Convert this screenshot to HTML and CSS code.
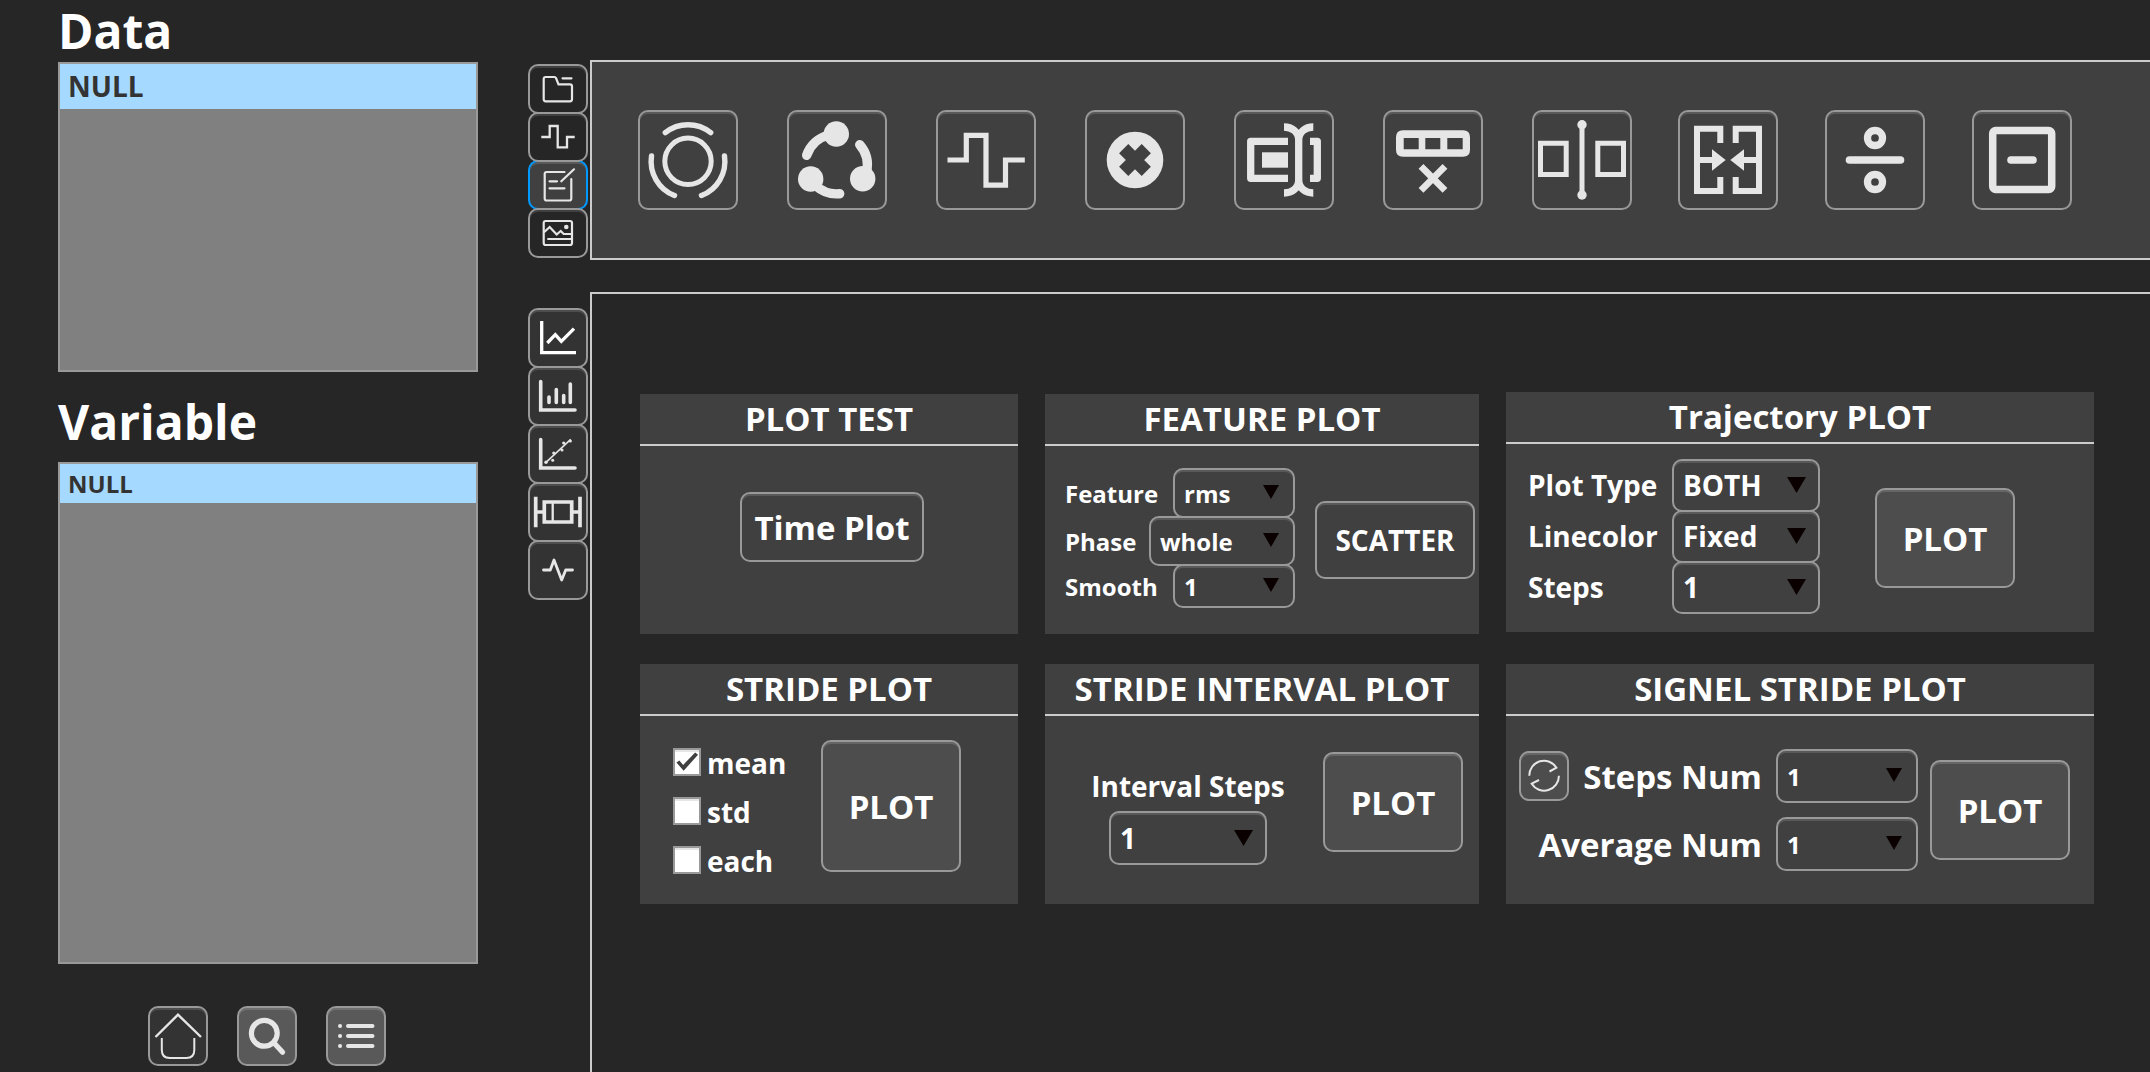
FILE: index.html
```
<!DOCTYPE html>
<html lang="en">
<head>
    <meta charset="UTF-8">
    <meta name="viewport" content="width=device-width, initial-scale=1.0">
    <title>Stride Plot</title>
    <link rel="stylesheet" href="styles.css">
</head>
<body>
    <aside class="sidebar">
        <h1>Data</h1>
        <ul class="list data-list">
            <li class="selected">NULL</li>
        </ul>

        <h1 class="variable-title">Variable</h1>
        <ul class="list variable-list">
            <li class="selected">NULL</li>
        </ul>

        <div class="sidebar-buttons">
            <button type="button" class="btn icon-btn dark" aria-label="Home">
                <svg viewBox="2 2 56 56"><path stroke-width="2.4" d="M7.5 31 30 8.7 53 31"/><path stroke-width="2" d="M13.8 32v12q0 8 8 8h16.5q8 0 8-8V32"/></svg>
            </button>
            <button type="button" class="btn icon-btn light" aria-label="Search">
                <svg viewBox="2 2 56 56"><circle cx="27.3" cy="27.3" r="12.9" stroke-width="5.2"/><path stroke-width="5.2" stroke-linecap="round" d="M38 38l7.6 8.2"/></svg>
            </button>
            <button type="button" class="btn icon-btn light" aria-label="List">
                <svg viewBox="2 2 56 56"><path stroke-width="4" stroke-linecap="round" d="M14 20h.1M14 30h.1M14 40h.1M22 20h24.5M22 30h24.5M22 40h24.5"/></svg>
            </button>
        </div>
    </aside>

    <main class="main">
        <!-- Toolbar tabs -->
        <nav class="tabs top-tabs">
            <button type="button" class="btn" aria-label="File">
                <svg viewBox="2 2 56 46"><path stroke-width="2.2" stroke-linecap="round" d="M17.7 13H26.5Q27.5 13 28 14L30.5 20.3H42q2 0 2 2V35.3q0 2-2 2H17.7q-2 0-2-2V15q0-2 2-2zM34.5 14.3h9"/></svg>
            </button>
            <button type="button" class="btn" aria-label="Signal">
                <svg viewBox="2 2 56 46"><path stroke-width="2.3" d="M13.3 25H21.7V14H29.7V35.3H39V25H46.7"/></svg>
            </button>
            <button type="button" class="btn active" aria-label="Edit">
                <svg viewBox="2 2 56 46"><path stroke-width="2.2" stroke-linecap="round" d="M36.5 12H18.7q-2 0-2 2V38.5q0 2 2 2H41.3q2 0 2-2V19M33.3 21.3 46 9.3M21.5 21.3h7.5M21.5 28.3h15"/></svg>
            </button>
            <button type="button" class="btn" aria-label="Image">
                <svg viewBox="2 2 56 46"><rect x="15.7" y="13" width="28.3" height="24" rx="2" stroke-width="2.2"/><path stroke-width="2.2" d="M16 24.3 21.7 19 28.7 26.5 32.7 23 35.7 26H44M19.3 31H44"/><circle class="fill" cx="38.3" cy="19" r="2.3"/></svg>
            </button>
        </nav>

        <section class="toolbar">
            <div class="tool-group">
                <button type="button" class="btn tool" aria-label="Rotate">
                    <svg viewBox="2 2 96 96"><circle cx="50" cy="51.3" r="23.2" stroke-width="5"/><path stroke-width="5.4" stroke-linecap="round" d="M27.3 22.7A36.6 36.6 0 0 1 72.7 22.7M13.5 46A36.6 36.6 0 0 0 36.5 85.5M86.5 46A36.6 36.6 0 0 1 63.5 85.5"/></svg>
                </button>
                <button type="button" class="btn tool" aria-label="Cycle">
                    <svg viewBox="2 2 96 96"><path stroke-width="9.4" stroke-linecap="round" d="M19.7 45.3A31 31 0 0 1 42 25M72.7 34.7A31 31 0 0 1 79.5 62M29 76A31 31 0 0 0 52.7 83.7"/><g class="fill"><circle cx="49.3" cy="24" r="12.7"/><circle cx="75.7" cy="68.7" r="12.7"/><circle cx="23.7" cy="69" r="12.7"/></g></svg>
                </button>
                <button type="button" class="btn tool" aria-label="Square wave">
                    <svg viewBox="2 2 96 96"><path stroke-width="5.2" d="M11.5 50H30.3V25.3H50V75.2H69.5V50H88.8"/></svg>
                </button>
                <button type="button" class="btn tool" aria-label="Clear">
                    <svg viewBox="2 2 96 96"><circle class="fill" cx="50" cy="50" r="28.3"/><path class="cut" stroke-width="13" d="M38.7 38.7 61.3 61.3M61.3 38.7 38.7 61.3"/></svg>
                </button>
                <button type="button" class="btn tool" aria-label="Rename">
                    <svg viewBox="2 2 96 96"><path stroke-width="7.3" stroke-linejoin="round" d="M54 31.3H16.7V68.3H54M76 31.3H83.3V68.3H76M50 17C58 17 64.7 22 64.7 30V70C64.7 78 58 83 50 83M79.3 17C71.4 17 64.7 22 64.7 30M64.7 70C64.7 78 71.4 83 79.3 83"/><path class="fill" d="M28 42.3H54V57.7H28z"/></svg>
                </button>
                <button type="button" class="btn tool" aria-label="Delete row">
                    <svg viewBox="2 2 96 96"><path class="fill" fill-rule="evenodd" d="M20 20.3H80q7 0 7 7V39.7q0 7-7 7H20q-7 0-7-7V27.3q0-7 7-7zM20.7 28V39.3H35.7V28zM42.3 28V39.3H57.3V28zM64.3 28V39.3H79.7V28z"/><path stroke-width="6.8" d="M38 56.3 62 80.3M62 56.3 38 80.3"/></svg>
                </button>
                <button type="button" class="btn tool" aria-label="Split">
                    <svg viewBox="2 2 96 96"><path stroke-width="5" d="M8.5 33.2H34.2V64.5H8.5zM65.8 33.2H91.5V64.5H65.8zM50 14.7V85"/><g class="fill"><circle cx="50" cy="14.7" r="4.7"/><circle cx="50" cy="85" r="4.7"/></g></svg>
                </button>
            </div>
            <div class="tool-group narrow">
                <button type="button" class="btn tool" aria-label="Merge">
                    <svg viewBox="2 2 96 96"><path stroke-width="6" d="M42.3 33V18.7H19V81H42.3V67M57.7 33V18.7H81V81H57.7V67M20 50H35M80 50H65"/><path class="fill" d="M34 39.3 47.7 50 34 60.7zM66 39.3 52.3 50 66 60.7z"/></svg>
                </button>
                <button type="button" class="btn tool" aria-label="Divide">
                    <svg viewBox="2 2 96 96"><g stroke-width="7.3"><circle cx="50" cy="28" r="7.5"/><circle cx="50" cy="72" r="7.5"/></g><path stroke-width="7.6" stroke-linecap="round" d="M24.5 50H75.5"/></svg>
                </button>
                <button type="button" class="btn tool" aria-label="Subtract">
                    <svg viewBox="2 2 96 96"><rect x="20.7" y="20.5" width="59" height="59" rx="3" stroke-width="7.5"/><path stroke-width="7.6" stroke-linecap="round" d="M39 50H61"/></svg>
                </button>
            </div>
        </section>

        <!-- Plot tabs -->
        <nav class="tabs plot-tabs">
            <button type="button" class="btn dark" aria-label="Line chart">
                <svg class="bright" viewBox="2 2 56 56"><path stroke-width="3.3" d="M13.7 13V44.7H48M19.3 35 27.3 26.7 33.3 33.3 46 20.7"/></svg>
            </button>
            <button type="button" class="btn dark" aria-label="Bar chart">
                <svg viewBox="2 2 56 56"><path stroke-width="3.6" stroke-linecap="round" d="M12.7 15.5V44H47M21 31V36.5M28.3 23.5V36.5M35.7 29.5V36.5M42.3 18V36.5"/></svg>
            </button>
            <button type="button" class="btn dark" aria-label="Scatter chart">
                <svg viewBox="2 2 56 56"><path stroke-width="3.6" stroke-linecap="round" d="M12.7 15.5V44H47"/><path stroke-width="1.6" d="M17.7 38.7 42.7 15.3"/><g class="fill"><circle cx="18" cy="38.3" r="1.7"/><circle cx="24.7" cy="36.3" r="1.5"/><circle cx="25.7" cy="29" r="1.5"/><circle cx="34" cy="26" r="1.5"/><circle cx="35.7" cy="19" r="1.6"/><circle cx="42.3" cy="17" r="1.6"/></g></svg>
            </button>
            <button type="button" class="btn dark" aria-label="Box plot">
                <svg viewBox="2 2 56 56"><path stroke-width="3.7" d="M7.7 14.7V45.3M52 14.7V45.3M7.7 30H16M44 30H52M16.3 20H43.7V40H16.3z"/><path stroke-width="2.3" d="M24.7 20V40"/></svg>
            </button>
            <button type="button" class="btn dark" aria-label="Pulse">
                <svg viewBox="2 2 56 56"><path stroke-width="2.8" stroke-linecap="round" stroke-linejoin="round" d="M15.5 30H22.3L26 20 33.7 40 37.7 30H44.5"/></svg>
            </button>
        </nav>

        <section class="plots">
            <div class="column col-test">
                <div class="card">
                    <h2>PLOT TEST</h2>
                    <div class="card-body test-body">
                        <button type="button" class="btn time-plot">Time Plot</button>
                    </div>
                </div>
                <div class="card">
                    <h2>STRIDE PLOT</h2>
                    <div class="card-body stride-body">
                        <div class="checks">
                            <label><input type="checkbox" checked>mean</label>
                            <label><input type="checkbox">std</label>
                            <label><input type="checkbox">each</label>
                        </div>
                        <button type="button" class="btn plot tall">PLOT</button>
                    </div>
                </div>
            </div>

            <div class="column col-feature">
                <div class="card">
                    <h2>FEATURE PLOT</h2>
                    <div class="card-body feature-body">
                        <div class="fields small">
                            <div class="field">
                                <label for="feature">Feature</label>
                                <span class="combo"><select id="feature"><option>rms</option></select></span>
                            </div>
                            <div class="field">
                                <label for="phase">Phase</label>
                                <span class="combo wide"><select id="phase"><option>whole</option></select></span>
                            </div>
                            <div class="field">
                                <label for="smooth">Smooth</label>
                                <span class="combo short"><select id="smooth"><option>1</option></select></span>
                            </div>
                        </div>
                        <button type="button" class="btn scatter">SCATTER</button>
                    </div>
                </div>
                <div class="card">
                    <h2>STRIDE INTERVAL PLOT</h2>
                    <div class="card-body interval-body">
                        <div class="interval">
                            <label for="interval">Interval Steps</label>
                            <span class="combo"><select id="interval"><option>1</option></select></span>
                        </div>
                        <button type="button" class="btn plot">PLOT</button>
                    </div>
                </div>
            </div>

            <div class="column col-trajectory">
                <div class="card">
                    <h2>Trajectory PLOT</h2>
                    <div class="card-body trajectory-body">
                        <div class="fields large">
                            <div class="field">
                                <label for="plotType">Plot Type</label>
                                <span class="combo"><select id="plotType"><option>BOTH</option></select></span>
                            </div>
                            <div class="field">
                                <label for="linecolor">Linecolor</label>
                                <span class="combo"><select id="linecolor"><option>Fixed</option></select></span>
                            </div>
                            <div class="field">
                                <label for="steps">Steps</label>
                                <span class="combo"><select id="steps"><option>1</option></select></span>
                            </div>
                        </div>
                        <button type="button" class="btn plot">PLOT</button>
                    </div>
                </div>
                <div class="card">
                    <h2>SIGNEL STRIDE PLOT</h2>
                    <div class="card-body single-body">
                        <div class="single-fields">
                            <div class="field">
                                <button type="button" class="btn refresh" aria-label="Refresh">
                                    <svg viewBox="2 2 46 46"><path stroke-width="2" d="M10.3 24.7A14.7 14.7 0 0 1 37.5 16.7L30.5 20.5M39.9 24.7A14.7 14.7 0 0 1 12.7 32.7L20 29"/></svg>
                                </button>
                                <label for="stepsNum">Steps Num</label>
                                <span class="combo"><select id="stepsNum"><option>1</option></select></span>
                            </div>
                            <div class="field">
                                <label for="averageNum">Average Num</label>
                                <span class="combo"><select id="averageNum"><option>1</option></select></span>
                            </div>
                        </div>
                        <button type="button" class="btn plot">PLOT</button>
                    </div>
                </div>
            </div>
        </section>
    </main>
</body>
</html>
```
FILE: styles.css
```
* {
    box-sizing: border-box;
}

body {
    display: flex;
    min-height: 100vh;
    margin: 0;
    background-color: #262626;
    color: #fff;
    font-family: "Open Sans", "Noto Sans", sans-serif;
    font-weight: bold;
}

/* Sidebar */
.sidebar {
    display: flex;
    flex-direction: column;
    width: 478px;
    padding: 0 0 6px 58px;
}

h1 {
    margin: 0;
    height: 62px;
    font-size: 48px;
    line-height: 62px;
}

.variable-title {
    height: 90px;
    line-height: 100px;
}

.list {
    margin: 0;
    padding: 0;
    list-style: none;
    background-color: #808080;
    border: 2px solid #999;
}

.list li {
    padding: 0 8px;
    color: #333;
}

.list .selected {
    background-color: #a6d9ff;
}

.data-list {
    height: 310px;
    font-size: 28px;
    line-height: 45px;
}

.variable-list {
    flex: 1;
    font-size: 24px;
    line-height: 39px;
}

.sidebar-buttons {
    display: flex;
    gap: 29px;
    margin: 42px 0 0 90px;
}

/* Buttons */
.btn {
    display: flex;
    align-items: center;
    justify-content: center;
    flex-shrink: 0;
    padding: 0;
    border: 2px solid #999;
    border-radius: 10px;
    background-color: #404040;
    box-shadow: inset 0 2px 0 #595959;
    color: #fff;
    font-family: inherit;
    font-weight: bold;
    font-size: 33px;
    cursor: pointer;
}

.btn:hover {
    border-color: #0099ff;
}

.btn svg {
    display: block;
    width: 100%;
    height: 100%;
    fill: none;
    stroke: #e6e6e6;
}

.btn svg .fill {
    fill: #e6e6e6;
    stroke: none;
}

.btn svg .cut {
    stroke: #404040;
}

.btn svg.bright {
    stroke: #fff;
}

.icon-btn {
    width: 60px;
    height: 60px;
}

.dark {
    background-color: #333;
    box-shadow: inset 0 2px 0 #4d4d4d;
}

.light {
    background-color: #595959;
    box-shadow: inset 0 2px 0 #707070;
}

/* Main area */
.main {
    flex: 1;
    display: grid;
    grid-template-columns: 60px 1fr;
    grid-template-rows: 200px 1fr;
    column-gap: 2px;
    row-gap: 32px;
    min-width: 0;
    padding: 60px 0 0 50px;
}

.tabs {
    display: flex;
    flex-direction: column;
}

.tabs .btn {
    position: relative;
    width: 60px;
}

.tabs .btn + .btn {
    margin-top: -2px;
}

.top-tabs {
    padding-top: 4px;
}

.top-tabs .btn {
    z-index: 1;
    height: 50px;
    background-color: #262626;
    box-shadow: inset 0 2px 0 #404040;
}

.top-tabs .active {
    z-index: 0;
    background-color: #404040;
    border-color: #0099ff;
    box-shadow: inset 0 2px 0 #595959;
}

.plot-tabs {
    padding-top: 16px;
}

.plot-tabs .btn {
    height: 60px;
}

.toolbar {
    display: flex;
    align-items: center;
    gap: 46px;
    padding-left: 46px;
    background-color: #404040;
    border: 2px solid #ccc;
    border-right: none;
    overflow: hidden;
}

.tool-group {
    display: flex;
    gap: 49px;
}

.narrow {
    gap: 47px;
}

.tool {
    width: 100px;
    height: 100px;
}

/* Plot cards */
.plots {
    display: flex;
    align-items: flex-start;
    gap: 27px;
    padding: 98px 56px 0 48px;
    border-top: 2px solid #ccc;
    border-left: 2px solid #ccc;
}

.column {
    display: flex;
    flex-direction: column;
    gap: 30px;
}

.col-test {
    flex: 378 1 0;
    padding-top: 2px;
}

.col-feature {
    flex: 434 1 0;
    padding-top: 2px;
}

.col-trajectory {
    flex: 588 1 0;
    gap: 32px;
}

.card {
    background-color: #404040;
}

h2 {
    margin: 0;
    border-bottom: 2px solid #ccc;
    font-size: 33px;
    line-height: 50px;
    text-align: center;
    white-space: nowrap;
}

.card-body {
    display: flex;
    align-items: center;
    height: 188px;
}

.field {
    display: flex;
    align-items: center;
    justify-content: space-between;
    white-space: nowrap;
}

.combo {
    position: relative;
    display: block;
    flex-shrink: 0;
    height: 54px;
    font-size: 28px;
}

.combo select {
    appearance: none;
    width: 100%;
    height: 100%;
    padding: 0 9px;
    border: 2px solid #999;
    border-radius: 10px;
    background-color: transparent;
    box-shadow: inset 0 2px 0 #595959;
    color: #fff;
    font: inherit;
}

.combo option {
    background-color: #404040;
}

/* Drop-down arrow */
.combo::after {
    content: "";
    position: absolute;
    top: calc(50% - 8px);
    right: 14px;
    width: 19px;
    height: 16px;
    background-color: #0a0000;
    clip-path: polygon(0 0, 100% 0, 50% 100%);
    pointer-events: none;
}

.fields {
    margin-bottom: 4px;
}

.fields .field + .field {
    margin-top: -2px;
}

.plot {
    width: 140px;
    height: 100px;
    background-color: #4d4d4d;
    box-shadow: inset 0 2px 0 #666;
}

.tall {
    height: 132px;
}

/* Plot test */
.test-body {
    justify-content: center;
    padding: 0 0 26px 6px;
}

.time-plot {
    width: 184px;
    height: 70px;
}

/* Stride plot */
.stride-body {
    align-items: flex-start;
    padding: 24px 0 0 33px;
}

.checks {
    display: flex;
    flex-direction: column;
    gap: 21px;
    width: 148px;
    padding-top: 8px;
    font-size: 28px;
    line-height: 30px;
}

.checks label {
    display: flex;
    gap: 6px;
    height: 28px;
}

.checks input {
    appearance: none;
    width: 28px;
    height: 28px;
    margin: 0;
    border: 2px solid #999;
    background-color: #fff;
    box-shadow: inset 0 2px 0 #e6e6e6;
}

.checks input:checked::before {
    content: "";
    display: block;
    height: 100%;
    background-color: #404040;
    clip-path: polygon(6% 52%, 18% 44%, 34% 62%, 84% 10%, 96% 20%, 36% 86%);
}

/* Feature plot */
.feature-body {
    gap: 20px;
    padding-left: 20px;
}

.small {
    width: 230px;
    font-size: 24px;
}

.small .combo {
    width: 122px;
    height: 50px;
    font-size: 24px;
}

.small .wide {
    width: 146px;
}

.small .short {
    height: 44px;
}

.small .combo::after,
.single-fields .combo::after {
    right: 16px;
    width: 16px;
    height: 14px;
}

.scatter {
    width: 160px;
    height: 78px;
    font-size: 28px;
}

/* Stride interval plot */
.interval-body {
    gap: 38px;
    padding: 0 0 16px 46px;
}

.interval {
    display: flex;
    flex-direction: column;
    align-items: center;
    width: 194px;
    padding-top: 22px;
    font-size: 28px;
    line-height: 50px;
    white-space: nowrap;
}

.interval .combo {
    width: 158px;
}

/* Trajectory plot */
.trajectory-body {
    gap: 55px;
    padding-left: 22px;
}

.large {
    width: 292px;
    font-size: 28px;
}

.large .combo {
    width: 148px;
    height: 53px;
}

/* Single stride plot */
.single-body {
    gap: 12px;
    padding-left: 14px;
}

.single-fields {
    display: flex;
    flex-direction: column;
    gap: 14px;
    width: 398px;
    font-size: 33px;
}

.single-fields .field {
    justify-content: flex-end;
    gap: 14px;
}

.single-fields .combo {
    width: 142px;
    font-size: 24px;
}

.refresh {
    width: 50px;
    height: 50px;
    background-color: #4d4d4d;
    box-shadow: inset 0 2px 0 #666;
}
```
